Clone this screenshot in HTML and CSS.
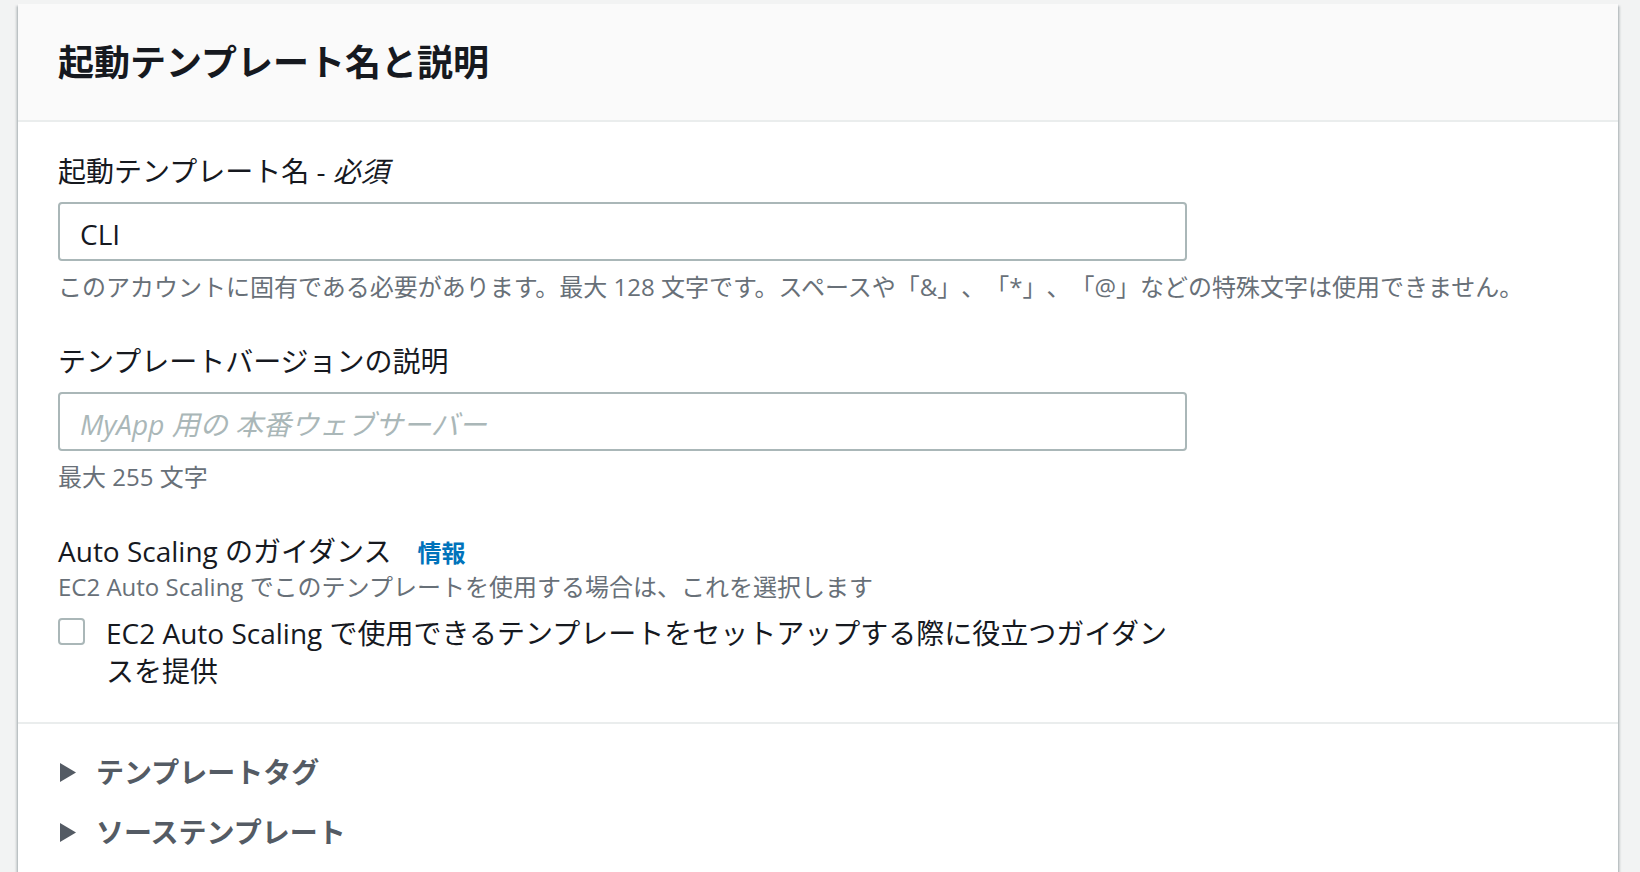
FILE: index.html
```html
<!DOCTYPE html>
<html lang="ja">
<head>
<meta charset="utf-8">
<title>起動テンプレート名と説明</title>
<link rel="stylesheet" href="styles.css">
</head>
<body>
<div class="page">
  <section class="card">
    <header class="card-header">
      <h2 class="card-title">起動テンプレート名と説明</h2>
    </header>
    <div class="card-body">
      <div class="field">
        <label class="field-label" for="tplname">起動テンプレート名 - <i>必須</i></label>
        <input class="text-input" id="tplname" type="text" value="CLI">
        <p class="hint">このアカウントに固有である必要があります。最大 128 文字です。スペースや「&amp;」、「*」、「@」などの特殊文字は使用できません。</p>
      </div>
      <div class="field field-second">
        <label class="field-label" for="tpldesc">テンプレートバージョンの説明</label>
        <input class="text-input" id="tpldesc" type="text" placeholder="MyApp 用の 本番ウェブサーバー">
        <p class="hint">最大 255 文字</p>
      </div>
      <div class="field field-third">
        <div class="field-label">Auto Scaling のガイダンス<a class="info" href="#">情報</a></div>
        <p class="desc">EC2 Auto Scaling でこのテンプレートを使用する場合は、これを選択します</p>
        <label class="check-row">
          <span class="checkbox"></span>
          <span class="check-text">EC2 Auto Scaling で使用できるテンプレートをセットアップする際に役立つガイダンスを提供</span>
        </label>
      </div>
    </div>
    <div class="card-footer">
      <div class="expander">
        <svg class="caret" width="16" height="19" viewBox="0 0 16 19"><polygon points="0,0 16,9.5 0,19" fill="#545b64"/></svg>
        <span class="expander-title">テンプレートタグ</span>
      </div>
      <div class="expander">
        <svg class="caret" width="16" height="19" viewBox="0 0 16 19"><polygon points="0,0 16,9.5 0,19" fill="#545b64"/></svg>
        <span class="expander-title">ソーステンプレート</span>
      </div>
    </div>
  </section>
</div>
</body>
</html>
```
FILE: styles.css
```css
html, body {
  margin: 0;
  padding: 0;
}
body {
  background: #f2f3f3;
  font-family: "Open Sans", "Noto Sans CJK JP", sans-serif;
  color: #16191f;
  height: 872px;
  overflow: hidden;
  text-spacing-trim: space-all;
}
.page {
  padding: 4px 22px 0 18px;
}
.card {
  background: #ffffff;
  box-shadow: 0 2px 2px rgba(0, 28, 36, 0.3), 2px 2px 2px rgba(0, 28, 36, 0.15), -2px 2px 2px rgba(0, 28, 36, 0.15);
  min-height: 900px;
}
.card-header {
  background: #fafafa;
  border-bottom: 2px solid #eaeded;
  padding: 37px 40px 35px;
}
.card-title {
  margin: 0;
  font-size: 36px;
  line-height: 44px;
  font-weight: 700;
  color: #16191f;
}
.card-body {
  padding: 29px 40px 32px;
  border-bottom: 2px solid #eaeded;
}
.field {
  display: flex;
  flex-direction: column;
  align-items: flex-start;
}
.field-second {
  margin-top: 38px;
}
.field-third {
  margin-top: 38px;
}
.field-label {
  font-size: 28px;
  line-height: 40px;
  color: #16191f;
  margin-bottom: 11px;
}
.field-third .field-label {
  margin-bottom: 0;
}
.field-label i {
  font-style: italic;
}
.info {
  color: #0073bb;
  font-weight: 700;
  font-size: 24px;
  text-decoration: none;
  margin-left: 26px;
}
.text-input {
  box-sizing: border-box;
  width: 1129px;
  height: 59px;
  margin: 0;
  border: 2px solid #aab7b8;
  border-radius: 4px;
  padding: 4px 20px 0;
  font-family: "Open Sans", "Noto Sans CJK JP", sans-serif;
  font-size: 28px;
  color: #16191f;
  background: #ffffff;
  outline: none;
}
.text-input::placeholder {
  color: #aab7b8;
  font-style: italic;
}
.hint, .desc {
  margin: 10px 0 0;
  font-size: 24px;
  line-height: 32px;
  color: #687078;
}
.desc {
  margin-top: -2px;
}
.check-row {
  display: flex;
  align-items: flex-start;
  gap: 21px;
  margin-top: 11px;
  width: 1118px;
}
.checkbox {
  flex: none;
  box-sizing: border-box;
  width: 27px;
  height: 27px;
  margin-top: 4px;
  border: 2px solid #aab7b8;
  border-radius: 4px;
  background: #ffffff;
}
.check-text {
  font-size: 28px;
  line-height: 38px;
  color: #16191f;
}
.card-footer {
  padding: 28px 40px 0 42px;
  display: flex;
  flex-direction: column;
  gap: 20px;
}
.expander {
  display: flex;
  align-items: center;
  gap: 20px;
  height: 40px;
}
.caret {
  flex: none;
}
.expander-title {
  font-size: 28px;
  line-height: 40px;
  font-weight: 700;
  color: #545b64;
}
```
